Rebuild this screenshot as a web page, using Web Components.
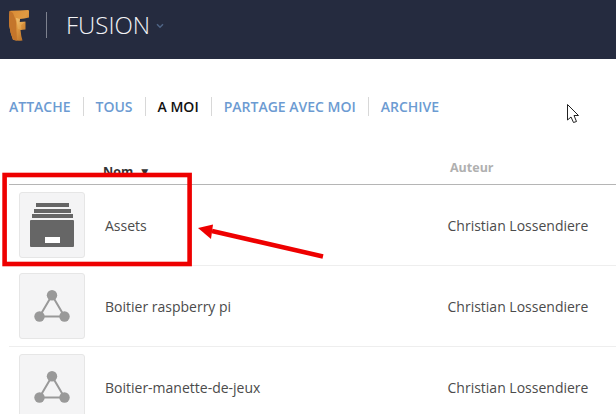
<!DOCTYPE html>
<html><head><meta charset="utf-8">
<style>
html,body{margin:0;padding:0;background:#fff}
body{width:616px;height:414px;overflow:hidden;position:relative;font-family:"Open Sans",sans-serif}
</style></head><body>
<app-header></app-header>
<tab-bar>
<tab-item>ATTACHE</tab-item><tab-item>TOUS</tab-item><tab-item active>A MOI</tab-item><tab-item>PARTAGE AVEC MOI</tab-item><tab-item>ARCHIVE</tab-item>
</tab-bar>
<list-head></list-head>
<list-row name="Assets" author="Christian Lossendiere" kind="archive"></list-row>
<list-row name="Boitier raspberry pi" author="Christian Lossendiere"></list-row>
<list-row name="Boitier-manette-de-jeux" author="Christian Lossendiere"></list-row>
<mark-up></mark-up>
<script>
function def(name,html){
  customElements.define(name,class extends HTMLElement{
    connectedCallback(){
      if(this.shadowRoot)return;
      const r=this.attachShadow({mode:'open'});
      r.innerHTML=typeof html==='function'?html(this):html;
    }
  });
}
def('app-header',`<style>
:host{display:flex;align-items:center;height:59px;background:#252b3f;box-sizing:border-box;padding-left:9px}
svg{display:block}
.sep{width:1px;height:26px;background:#7d818e;margin:0 0 9px 17px}
.t{font:300 24px/32px "Open Sans",sans-serif;color:#f2f3f6;margin:0 0 9px 19px}
.c{margin:0 0 7px 6px}
</style>
<svg width="20" height="31" viewBox="0 0 20 31" style="margin-bottom:9px">
<defs><linearGradient id="g" x1="0" y1="0" x2="1" y2="1"><stop offset="0" stop-color="#d98a35"/><stop offset=".5" stop-color="#e09a42"/><stop offset="1" stop-color="#a9601f"/></linearGradient>
<linearGradient id="h" x1="0" y1="0" x2="1" y2="1"><stop offset="0" stop-color="#f0c070"/><stop offset="1" stop-color="#d98f36"/></linearGradient></defs>
<path d="M1.500 .8 Q10 .8 19 0 Q20 0 20 1 L20 7.500 Q15 8.500 11 9 L10.500 12 L16.500 11.800 L16.500 19.500 L11.500 20 Q12 26 13.500 30.500 Q8 31.200 4 29.800 Q1.500 24 .3 16 Q-.2 8 .5 1.500 Z" fill="url(#g)"/>
<path d="M1 1 L4 3 L7 11 L8 30.500 L4 29.800 Q1.500 24 .3 16 Q-.2 8 .5 1.500 Z" fill="#c4752b"/>
<path d="M7 8 L11 9 L10.500 12 L16.500 11.800 L12 15 L12.500 20 L9 19 Z" fill="url(#h)"/>
</svg>
<div class="sep"></div><div class="t">FUSION</div>
<svg class="c" width="8" height="6" viewBox="0 0 8 6"><path d="M1 1.200 L4 4.200 L7 1.200" fill="none" stroke="#4f6485" stroke-width="1.500"/></svg>`);
def('tab-bar',`<style>
:host{display:flex;align-items:center;height:19px;margin-top:38px;padding-left:9px}
</style><slot></slot>`);
def('tab-item',`<style>
:host{display:flex;align-items:center;font:600 14px/19px "Open Sans",sans-serif;color:#6c9bd2}
:host([active]){color:#111}
:host(:not(:first-child))::before{content:"";width:1px;height:19px;background:#d8d8d8;margin:0 12px}
</style><slot></slot>`);
def('list-head',`<style>
:host{display:grid;grid-template-columns:95px 345px 1fr;margin:45px 0 0 9px;height:23px;border-bottom:1px solid #b5b5b5;font:700 12.500px/17px "Open Sans",sans-serif;position:relative}
.n{grid-column:2;color:#333;padding-top:2px;display:flex;gap:8px;margin-left:-1px}
.a{color:#b0b0b0;margin-top:-2px;margin-left:1px}
.n i{font:normal 9px/17px "DejaVu Sans",sans-serif;color:#333;margin-top:1px}
</style><div class="n">Nom <i>▼</i></div><div class="a">Auteur</div>`);
def('list-row',(h)=>{
  const archive=h.getAttribute('kind')==='archive';
  const icon=archive?`<svg width="44" height="44" viewBox="0 0 44 44">
<rect x="6" y="0" width="33" height="4" fill="#666"/><rect x="4" y="6" width="37" height="4" fill="#666"/><rect x="2" y="11" width="41" height="4" fill="#666"/>
<rect x="0" y="17" width="44" height="27" rx="1" fill="#666"/><rect x="15" y="34" width="15" height="6" fill="#fff"/></svg>`
  :`<svg width="36" height="32" viewBox="0 0 36 32"><path d="M18 5.300 L5.500 26.500 L30.500 26.500 Z" fill="none" stroke="#999" stroke-width="2"/><circle cx="18" cy="5.300" r="5.200" fill="#999"/><circle cx="5.500" cy="26.500" r="5.200" fill="#999"/><circle cx="30.500" cy="26.500" r="5.200" fill="#999"/></svg>`;
  return `<style>
:host{display:grid;grid-template-columns:96px 342.500px 1fr;align-items:center;height:80px;margin-left:9px;border-bottom:1px solid #eee;font:400 14px/19px "Open Sans",sans-serif;color:#4b4b4b}
.th{width:64px;height:64px;margin-left:10px;background:#f4f4f5;border:1px solid #e6e6e6;border-radius:3px;display:flex;align-items:center;justify-content:center}
.name{grid-column:2}
</style><div class="th">${icon}</div><div class="name">${h.getAttribute('name')}</div><div>${h.getAttribute('author')}</div>`;
});
def('mark-up',`<style>
:host{position:absolute;inset:0;display:block;pointer-events:none}
svg{position:absolute;left:0;top:0}
</style><svg width="616" height="414" viewBox="0 0 616 414">
<rect x="4.600" y="175" width="185" height="89" fill="none" stroke="#ee0000" stroke-width="4.600"/>
<path d="M323 256.500 L212 231" stroke="#ee0000" stroke-width="4.500" fill="none"/>
<path d="M198 228 L213 224.500 L211 239 Z" fill="#ee0000"/>
<path d="M567.500 104.500 L567.500 120 L571 117 L573.500 122.500 L576.500 121.500 L574 115.500 L578.500 115.500 Z" fill="#fff" stroke="#222" stroke-width="1" stroke-linejoin="round"/>
</svg>`);
</script>
</body></html>
